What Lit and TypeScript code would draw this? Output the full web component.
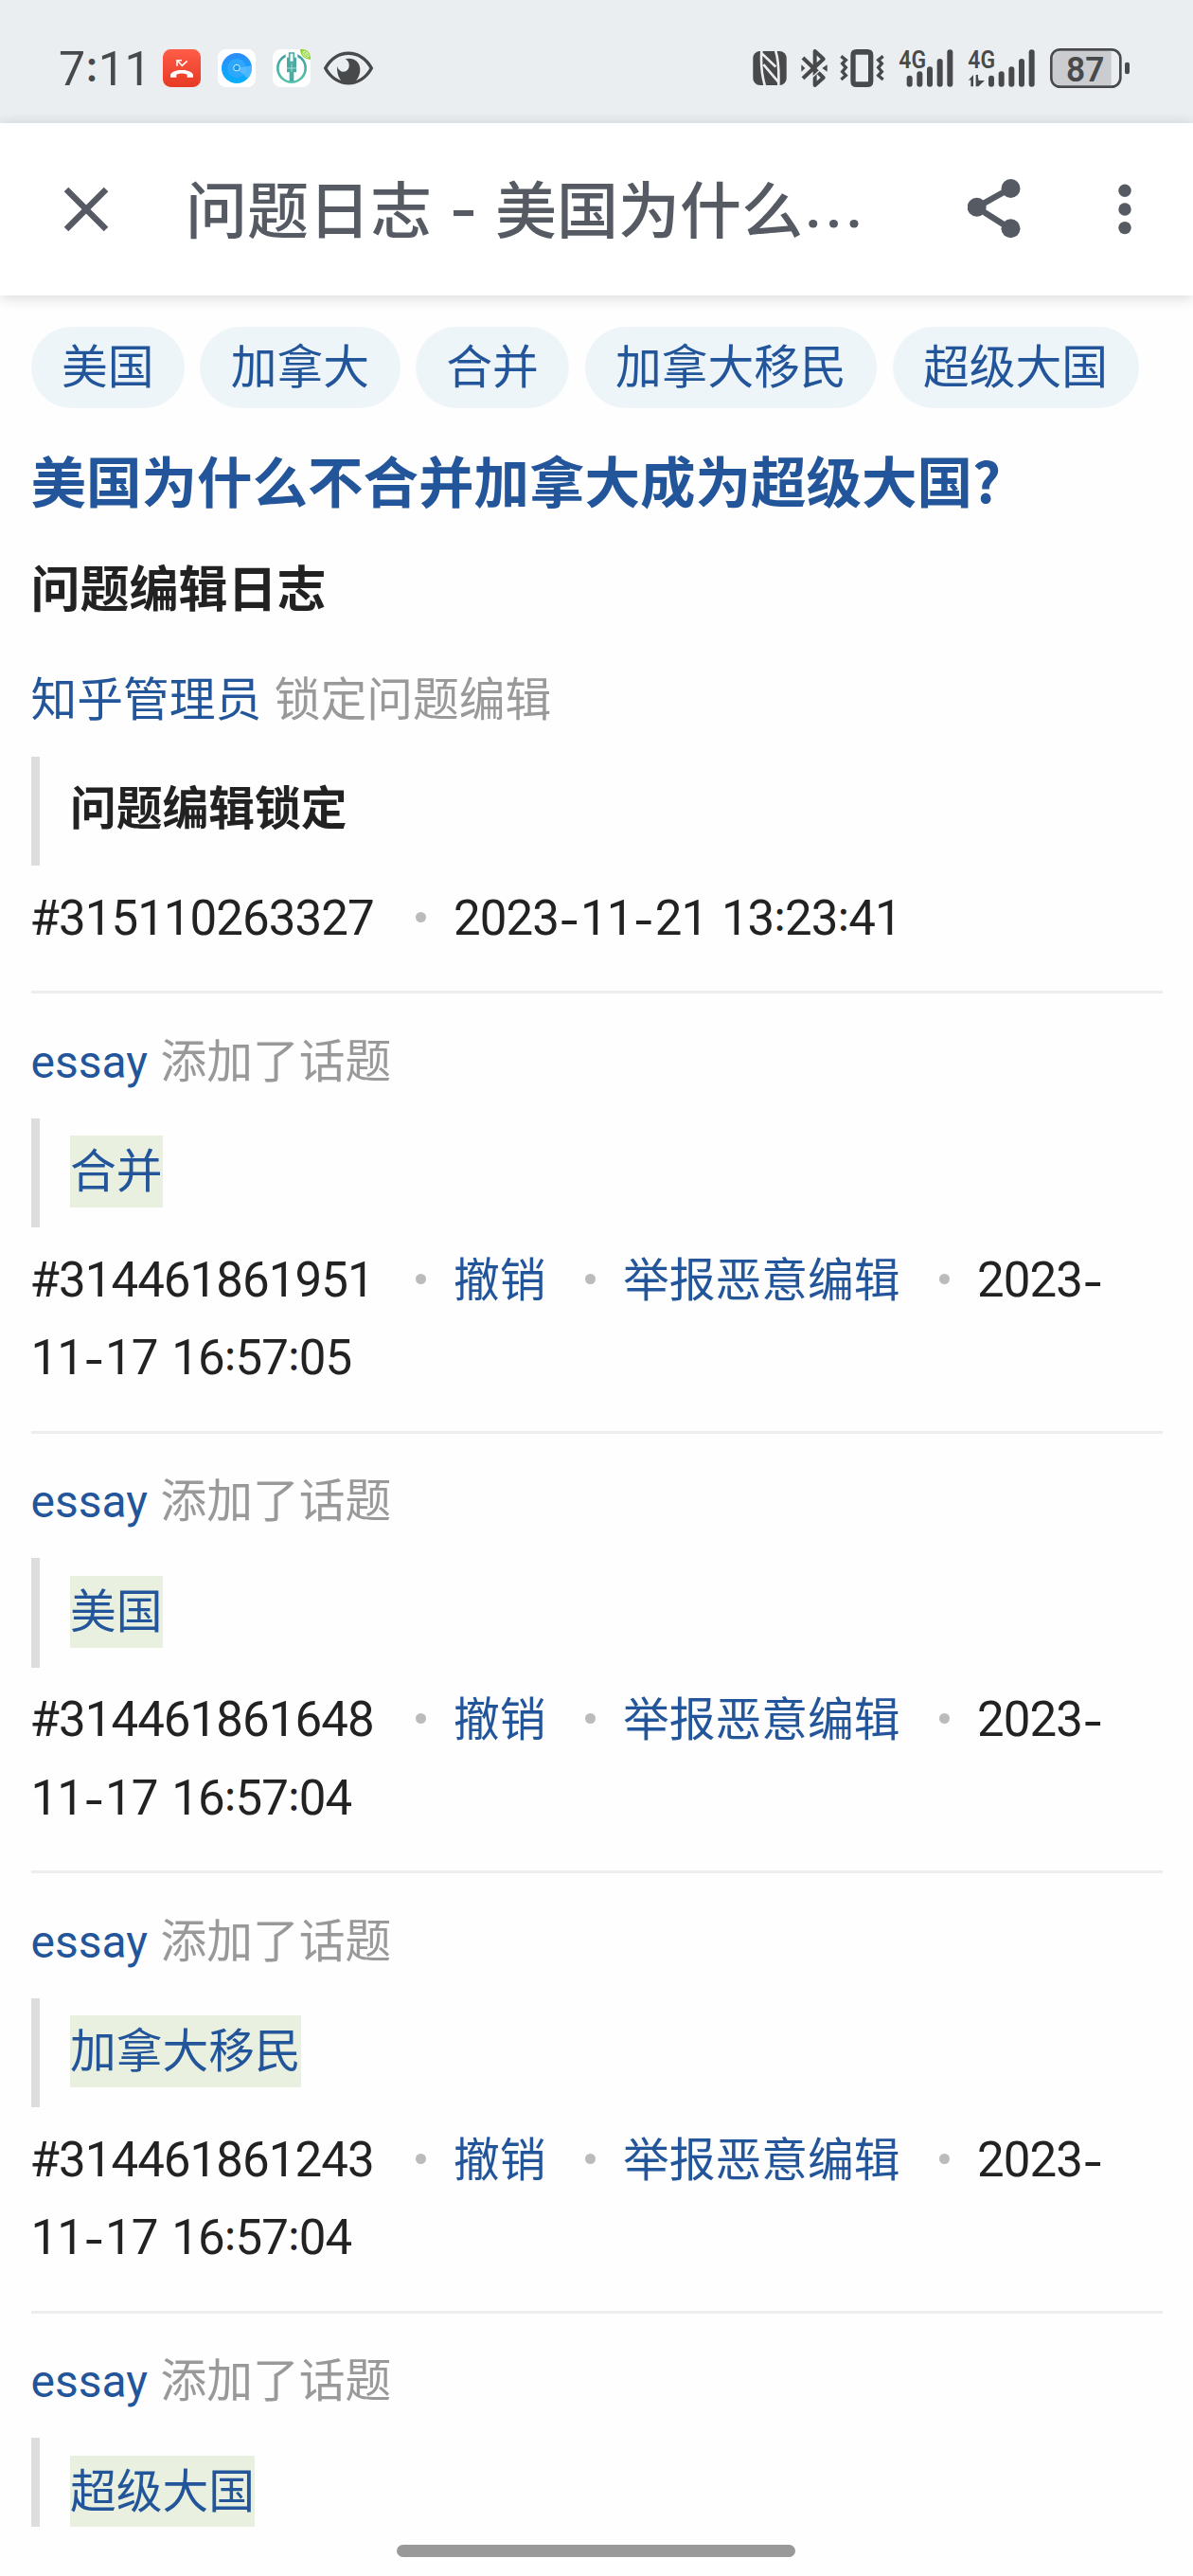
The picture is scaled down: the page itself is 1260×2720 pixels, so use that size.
import { LitElement, html, css, svg, nothing } from "lit";
import { customElement, property } from "lit/decorators.js";

interface LogEntry {
  user: string;
  action: string;
  title?: string;
  topic?: string;
  id?: string;
  date?: string;
  editable: boolean;
}

const TOPICS = ["美国", "加拿大", "合并", "加拿大移民", "超级大国"];

const ENTRIES: LogEntry[] = [
  { user: "知乎管理员", action: "锁定问题编辑", title: "问题编辑锁定", id: "315110263327", date: "2023-11-21 13:23:41", editable: false },
  { user: "essay", action: "添加了话题", topic: "合并", id: "314461861951", date: "2023-11-17 16:57:05", editable: true },
  { user: "essay", action: "添加了话题", topic: "美国", id: "314461861648", date: "2023-11-17 16:57:04", editable: true },
  { user: "essay", action: "添加了话题", topic: "加拿大移民", id: "314461861243", date: "2023-11-17 16:57:04", editable: true },
  { user: "essay", action: "添加了话题", topic: "超级大国", editable: true },
];

@customElement("status-bar")
class StatusBar extends LitElement {
  static styles = css`
    :host { display: flex; align-items: center; height: 130px; box-sizing: border-box; padding: 14px 67px 0 62px; background: #eaeef1; color: #48494b; }
    .time { width: 110px; font: 450 50px/60px Roboto, sans-serif; letter-spacing: -0.2px; white-space: nowrap; padding-top: 1px; }
    .colon { font-family: Inter, sans-serif; position: relative; top: -4px; font-size: 46px; }
    .icons { display: flex; align-items: center; }
    .left { gap: 18px; }
    .eye { margin-left: -4px; }
    .right { margin-left: auto; }
    .bt { margin-left: 15px; }
    .vib { margin-left: 13px; }
    .sig { margin-left: 15px; }
    .bat { margin-left: 16px; }
    svg { display: block; overflow: visible; }
  `;

  render() {
    return html`
      <div class="time">7<span class="colon">:</span>11</div>
      <div class="icons left">
        <svg width="40" height="40" viewBox="396 66 120 120">
          <defs><linearGradient id="r" x1="0" y1="0" x2="0" y2="1"><stop offset="0" stop-color="#ff5c47" /><stop offset="1" stop-color="#e63a24" /></linearGradient></defs>
          <rect x="396" y="66" width="120" height="120" rx="25" fill="url(#r)" />
          <path d="M441 119V101H456M442 102L457 118L473 103" fill="none" stroke="#fff" stroke-width="4.5" />
          <path d="M420 155V147C426 127 486 127 492 147V155H473V146Q456 139 439 146V155Z" fill="#fff" />
        </svg>
        <svg width="40" height="40" viewBox="570 66 120 120">
          <defs><linearGradient id="b" x1="0" y1="0" x2="0" y2="1"><stop offset="0" stop-color="#2e8cf8" /><stop offset="1" stop-color="#04b0fd" /></linearGradient></defs>
          <rect x="570" y="66" width="120" height="120" rx="25" fill="#fff" />
          <circle cx="630" cy="126" r="48" fill="url(#b)" />
          <circle cx="630" cy="126" r="30" fill="#2ea8fd" />
          <path d="M630 126L677 118A48 48 0 0 1 665 159Z" fill="#7ac8ff" opacity=".55" />
          <circle cx="630" cy="125" r="10" fill="#1597f2" stroke="#d8f0ff" stroke-width="3" />
        </svg>
        <svg width="40" height="40" viewBox="744 66 120 120">
          <defs><clipPath id="c"><rect x="744" y="66" width="120" height="120" rx="25" /></clipPath>
          <linearGradient id="g" x1="0" y1="0" x2="0" y2="1"><stop offset="0" stop-color="#3f9f9b" /><stop offset="1" stop-color="#5cc3ad" /></linearGradient></defs>
          <rect x="744" y="66" width="120" height="120" rx="25" fill="#fff" />
          <circle cx="804" cy="126" r="44" fill="none" stroke="url(#g)" stroke-width="8" />
          <rect x="785" y="72" width="38" height="20" fill="#fff" />
          <path d="M789 92H796V109H812V92H819V139H811V168H797V139H789Z" fill="#49aba2" />
          <path d="M797 78H811V107H797Z" fill="#fff" stroke="#49aba2" stroke-width="5" />
          <path d="M789 126H819M804 113V138" stroke="#d8f0ec" stroke-width="2" />
          <g clip-path="url(#c)"><path d="M830 66H850Q864 68 864 82V99Q834 98 830 66Z" fill="#92d63b" />
          <ellipse cx="849" cy="82" rx="11" ry="7" fill="none" stroke="#e8fbd0" stroke-width="2.5" transform="rotate(45 849 82)" />
          <path d="M842 75L857 90M843 87L854 77" stroke="#e8fbd0" stroke-width="2.5" /></g>
        </svg>
        <svg class="eye" width="52" height="36" viewBox="906 72 156 108">
          <path d="M911 126C946 63 1022 63 1057 126C1022 189 946 189 911 126Z" fill="none" stroke="#48494b" stroke-width="10.5" stroke-linejoin="round" />
          <path d="M974 97C996 90 1021 103 1021 130C1021 156 1004 176 984 176C962 176 947 154 948 120C955 142 978 142 985 125C989 111 983 102 974 97Z" fill="#48494b" />
        </svg>
      </div>
      <div class="icons right">
        <svg width="36" height="36" viewBox="45 71 108 109">
          <defs><clipPath id="n"><rect x="45" y="71" width="108" height="109" rx="23" /></clipPath></defs>
          <g clip-path="url(#n)">
            <rect x="45" y="71" width="108" height="109" fill="#48494b" />
            <path d="M73 68Q68 130 84 184M71 76L118 121M117 68Q130 105 127 184M79 114L128 171" fill="none" stroke="#eaeef1" stroke-width="8" />
          </g>
        </svg>
        <svg class="bt" width="28" height="40" viewBox="197 66 84 120">
          <path d="M203 93L268 156L241 180V72L268 97L203 158" fill="none" stroke="#48494b" stroke-width="12" stroke-linejoin="round" />
          <path d="M216 155L262 112" stroke="#eaeef1" stroke-width="4" transform="translate(9 7)" />
          <path d="M198 115L210 126L198 137ZM280 115L264 126L280 137Z" fill="#48494b" />
        </svg>
        <svg class="vib" width="47" height="40" viewBox="321 66 141 120">
          <path fill-rule="evenodd" d="M374 66H408Q427 66 427 85V167Q427 186 408 186H374Q355 186 355 167V85Q355 66 374 66ZM371 83V169H411V83Z" fill="#48494b" />
          <path d="M325 88L340 100L329 111L340 124L329 137L340 149L325 162M458 88L443 100L454 111L443 124L454 137L443 149L458 162" fill="none" stroke="#48494b" stroke-width="10" />
        </svg>
        <svg class="sig" width="58" height="40" viewBox="508 66 174 120">
          ${this.bars(543, [149, 136, 121, 96, 67])}
          <text x="509" y="125" font-family="Roboto" font-weight="600" font-size="80" textLength="86" lengthAdjust="spacingAndGlyphs" fill="#48494b">4G</text>
        </svg>
        <svg class="sig" width="71" height="40" viewBox="727 66 213 120">
          ${this.bars(802, [149, 136, 121, 96, 67])}
          <path d="M729 165L745 147V184H737V163ZM753 147H760V184H753ZM758 184V147L762 165H781L761 184Z" fill="#48494b" />
          <text x="728" y="125" font-family="Roboto" font-weight="600" font-size="80" textLength="86" lengthAdjust="spacingAndGlyphs" fill="#48494b">4G</text>
        </svg>
        <svg class="bat" width="84" height="42" viewBox="986 63 252 126">
          <rect x="990" y="67" width="219" height="118" rx="28" fill="none" stroke="#48494b" stroke-width="8" />
          <path d="M1180 72V180H1018Q995 180 995 157V95Q995 72 1018 72Z" fill="#cbcccf" />
          <rect x="1223" y="107" width="15" height="38" rx="7" fill="#48494b" />
          <text x="1037" y="167" font-family="Roboto" font-weight="600" font-size="112" textLength="121" lengthAdjust="spacingAndGlyphs" fill="#48494b">87</text>
        </svg>
      </div>
    `;
  }

  private bars(x0: number, tops: number[]) {
    return tops.map((t, i) => svg`<rect x=${x0 - 9 + i * 32} y=${t} width="18" height=${185 - t} rx="9" fill="#48494b" />`);
  }
}

@customElement("app-bar")
class AppBar extends LitElement {
  static styles = css`
    :host { display: flex; align-items: center; height: 182px; box-sizing: border-box; padding: 0 65px 0 65px; background: #fff; color: #555a63; position: relative; z-index: 1; box-shadow: 0 2px 14px rgba(0, 0, 0, 0.16); }
    .title { display: flex; align-items: center; margin-left: 79px; padding-bottom: 7px; font: 500 65px/100px "Noto Sans CJK SC", sans-serif; white-space: nowrap; flex: 1; }
    .dash { width: 67px; box-sizing: border-box; text-align: center; font-family: Inter, sans-serif; padding-top: 8px; }
    .more { font-family: Roboto, sans-serif; letter-spacing: 3.6px; margin-left: 2px; }
    .share { margin: 0 103px 3px 0; }
    svg { display: block; }
  `;

  render() {
    return html`
      <svg width="52" height="52" viewBox="0 0 52 52"><path d="M5 5L47 47M47 5L5 47" stroke="#555a63" stroke-width="6.5" /></svg>
      <div class="title"><span>问题日志</span><span class="dash">-</span><span>美国为什么</span><span class="more">...</span></div>
      <svg class="share" width="56" height="64" viewBox="1022 187 56 64">
        <path d="M1067 198L1031.5 218L1067 240.5" fill="none" stroke="#555a63" stroke-width="6.5" />
        <circle cx="1067.5" cy="198" r="10" fill="#555a63" /><circle cx="1031.7" cy="217.7" r="10" fill="#555a63" /><circle cx="1067.5" cy="240.3" r="10" fill="#555a63" />
      </svg>
      <svg width="14" height="54" viewBox="0 0 14 54" fill="#555a63"><circle cx="7" cy="7.2" r="6.7" /><circle cx="7" cy="27" r="6.7" /><circle cx="7" cy="46.6" r="6.7" /></svg>
    `;
  }
}

@customElement("log-entry")
class LogEntryRow extends LitElement {
  @property({ attribute: false }) entry!: LogEntry;

  static styles = css`
    :host { display: block; box-sizing: border-box; padding: 26.75px 0 38.25px; border-bottom: 3.25px solid #ededed; font: 48.75px/82.875px "Noto Sans CJK SC", sans-serif; color: #222; }
    .head { display: flex; align-items: baseline; gap: 13.5px; height: 85.375px; white-space: nowrap; }
    .user { color: #225599; }
    .latin { font-family: Roboto, sans-serif; font-size: 48px; width: 123.5px; }
    .action { color: #999; }
    .quote { display: flex; align-items: center; height: 115.4px; margin-top: 19.5px; box-sizing: border-box; border-left: 9px solid #ddd; padding: 0 0 2px 32.5px; }
    .strong { font-weight: 700; padding-bottom: 10px; }
    .topic { line-height: 67px; height: 76px; background: #eaf0df; color: #225599; }
    .meta { margin-top: 10.5px; word-spacing: 3px; }
    .num { display: inline-block; width: 365px; text-indent: -1px; }
    .num, .date { font-family: Roboto, sans-serif; font-size: 51px; letter-spacing: -0.94px; line-height: 60px; }
    .dot { display: inline-block; width: 11px; height: 11px; border-radius: 50%; background: #bbb; margin: 0 29px 13px 41.5px; vertical-align: baseline; }
    .link { color: #225599; line-height: 60px; }
    .dash { font-family: Inter, sans-serif; font-size: 49px; letter-spacing: 0.6px; position: relative; top: 2px; }
    .colon { font-family: Inter, sans-serif; font-size: 44px; position: relative; top: -4px; }
  `;

  private date(text: string) {
    let dashes = 0;
    return [...text].map((ch) => {
      if (ch === "-") {
        dashes += 1;
        return html`<span class="dash">-</span>${dashes === 1 ? html`<wbr>` : nothing}`;
      }
      return ch === ":" ? html`<span class="colon">:</span>` : ch;
    });
  }

  render() {
    const e = this.entry;
    const latin = /^[a-z]+$/.test(e.user);
    return html`
      <div class="head"><span class="user ${latin ? "latin" : ""}">${e.user}</span><span class="action">${e.action}</span></div>
      <div class="quote">${e.topic ? html`<span class="topic">${e.topic}</span>` : html`<span class="strong">${e.title}</span>`}</div>
      ${e.id && e.date
        ? html`<div class="meta"><span class="num">#${e.id}</span>${e.editable
            ? html`<i class="dot"></i><span class="link">撤销</span><i class="dot"></i><span class="link">举报恶意编辑</span>`
            : nothing}<i class="dot"></i><span class="date">${this.date(e.date)}</span></div>`
        : nothing}
    `;
  }
}

@customElement("app-root")
class AppRoot extends LitElement {
  static styles = css`
    :host { display: flex; flex-direction: column; height: 2720px; overflow: hidden; background: #fefefe; font-family: "Noto Sans CJK SC", sans-serif; }
    .page { height: 2356px; box-sizing: border-box; overflow: hidden; padding: 33px 32.5px 0; }
    .chips { display: flex; gap: 16.25px; }
    .chip { height: 86px; line-height: 78px; border-radius: 43px; padding: 0 32.5px; background: #edf5f9; color: #225599; font-size: 48.75px; white-space: nowrap; }
    .title { margin: 29.5px 0 0; font-size: 58.5px; line-height: 90px; font-weight: 700; color: #225599; white-space: nowrap; }
    .sub { margin: 28px 0 8.9px; font-size: 52px; line-height: 80px; font-weight: 700; color: #222; }
    .nav { display: flex; justify-content: center; padding: 19px 1px 0 0; }
    .pill { width: 421px; height: 13px; border-radius: 6.5px; background: #999; }
  `;

  render() {
    return html`
      <status-bar></status-bar>
      <app-bar></app-bar>
      <main class="page">
        <div class="chips">${TOPICS.map((t) => html`<span class="chip">${t}</span>`)}</div>
        <h1 class="title">美国为什么不合并加拿大成为超级大国?</h1>
        <h2 class="sub">问题编辑日志</h2>
        ${ENTRIES.map((e) => html`<log-entry .entry=${e}></log-entry>`)}
      </main>
      <div class="nav"><div class="pill"></div></div>
    `;
  }
}
